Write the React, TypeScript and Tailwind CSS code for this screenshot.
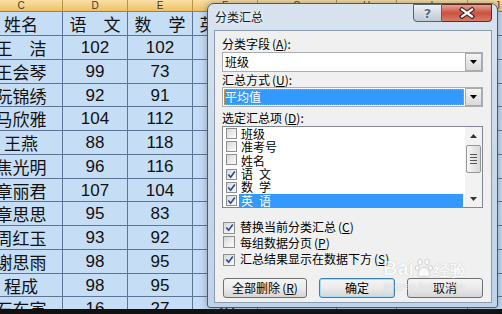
import clsx from "clsx";

const COLS = [
  { k: "C", w: "w-[83px]" },
  { k: "D", w: "w-[65px]" },
  { k: "E", w: "w-[65px]" },
  { k: "F", w: "w-[65px]" },
  { k: "G", w: "w-[79px]" },
  { k: "H", w: "w-[60px]" },
  { k: "I", w: "w-[71px]" },
  { k: "J", w: "w-[60px]" },
];

const ROWS = [
  ["姓名", "语　文", "数　学", "英　语"],
  ["王　洁", "102", "102", "98"],
  ["王会琴", "99", "73", "85"],
  ["阮锦绣", "92", "91", "90"],
  ["马欣雅", "104", "112", "101"],
  ["王燕", "88", "118", "95"],
  ["焦光明", "96", "116", "99"],
  ["章丽君", "107", "104", "102"],
  ["章思思", "95", "83", "88"],
  ["周红玉", "93", "92", "94"],
  ["谢思雨", "98", "95", "97"],
  ["程成", "98", "95", "93"],
  ["石东寅", "16", "27", "20"],
];

const ROW_H = [
  "h-6", "h-6", "h-6", "h-[23px]",
  "h-6", "h-6", "h-6", "h-[23px]",
  "h-6", "h-6", "h-6", "h-[23px]",
  "h-6",
];

const ITEMS = [
  { t: "班级", c: false },
  { t: "准考号", c: false },
  { t: "姓名", c: false },
  { t: "语\u2002文", c: true },
  { t: "数\u2002学", c: true },
  { t: "英\u2002语", c: true, sel: true },
];

function Mn({ k }: { k: string }) {
  return (
    <span className="ml-[2px]">
      (<span className="underline">{k}</span>)
    </span>
  );
}

function Check({ checked, big }: { checked?: boolean; big?: boolean }) {
  return (
    <span
      className={clsx(
        "inline-flex shrink-0 items-center justify-center border border-[#8e8f8f] bg-gradient-to-br from-[#d6d6d6] via-[#ebebeb] to-[#fbfbfb]",
        big ? "h-[12px] w-[12px]" : "h-[11px] w-[11px]"
      )}
    >
      {checked && (
        <svg viewBox="0 0 10 10" className="h-[9px] w-[9px]">
          <path d="M1.4 5 L4 7.9 L8.7 1.6" fill="none" stroke="#2b4b93" strokeWidth="1.8" />
        </svg>
      )}
    </span>
  );
}

function DropBtn() {
  return (
    <span className="flex h-[18px] w-[17px] shrink-0 items-center justify-center border border-[#a9a9a9] bg-gradient-to-b from-[#f4f4f4] to-[#dadada]">
      <svg width="7" height="4" viewBox="0 0 7 4">
        <path d="M0 0h7L3.5 4z" fill="#000" />
      </svg>
    </span>
  );
}

function Sheet() {
  return (
    <div className="h-[309px] overflow-hidden bg-[#c6ddf6] font-['Noto_Sans_CJK_SC',sans-serif] text-[#111]">
      <div className="ml-[-20px] flex h-[12px] border-b border-[#9c8048] bg-gradient-to-b from-[#fae0a6] to-[#efc060]">
        {COLS.map((c) => (
          <div
            key={c.k}
            className={clsx(
              c.w,
              "flex shrink-0 items-center justify-center border-r border-[#b8924a] font-['Liberation_Sans',sans-serif] text-[10px] leading-none text-[#3a3a3a]"
            )}
          >
            {c.k}
          </div>
        ))}
      </div>
      {ROWS.map((r, i) => (
        <div key={i} className={clsx(ROW_H[i], "ml-[-20px] flex border-b border-[#5d7496]")}>
          {COLS.map((c, j) => {
            const v = r[j] ?? "";
            const num = /^\d+$/.test(v);
            return (
              <div
                key={c.k}
                className={clsx(
                  c.w,
                  "flex shrink-0 items-center justify-center whitespace-pre border-r border-[#5d7496] text-[17px] leading-none",
                  num && "font-['Liberation_Sans',sans-serif]"
                )}
              >
                {v}
              </div>
            );
          })}
        </div>
      ))}
    </div>
  );
}

function Watermark() {
  // faint site stamp over the bottom-right corner
  return (
    <div className="pointer-events-none absolute left-[383px] top-[258px] flex flex-col items-center text-white opacity-60 [text-shadow:0_0_1px_#8a8a8a]">
      <div className="flex items-end">
        <span className="font-['Liberation_Sans',sans-serif] text-[20px] font-bold leading-none">Bai</span>
        <svg width="18" height="20" viewBox="0 0 18 20" className="mx-px">
          <g fill="#fff" stroke="#9a9a9a" strokeWidth="0.6">
            <ellipse cx="5" cy="4" rx="2.2" ry="3" />
            <ellipse cx="12" cy="4" rx="2.2" ry="3" />
            <ellipse cx="2.3" cy="10" rx="2" ry="2.6" />
            <ellipse cx="15.5" cy="10" rx="2" ry="2.6" />
            <path d="M9 9c-3 0-6 4.5-6 7.5 0 2.2 2 2.8 3.3 2.4 1.3-.4 2-.8 2.7-.8s1.4.4 2.7.8c1.3.4 3.3-.2 3.3-2.4C15 13.5 12 9 9 9z" />
          </g>
        </svg>
        <span className="text-[16px] font-bold leading-none">经验</span>
      </div>
      <span className="mt-[4px] font-['Liberation_Sans',sans-serif] text-[9px] leading-none tracking-[0.5px]">
        jingyan.baidu.com
      </span>
    </div>
  );
}

function Dialog() {
  return (
    <div className="absolute left-[207px] top-[3px] flex h-[305px] w-[291px] flex-col rounded-t-[7px] rounded-b-[3px] border border-[#4b5969] bg-gradient-to-b from-[#d8e3ef] via-[#cad9ea] to-[#bfd3e9] shadow-[0_0_7px_1px_rgba(60,70,90,0.35)] font-['Noto_Sans_CJK_SC',sans-serif]">
      <div className="flex h-[26px] shrink-0 items-start justify-between">
        <div className="pl-[7px] pt-[6px] text-[12px] leading-[14px] text-[#1b1b1b] [text-shadow:0_0_4px_#fff]">
          分类汇总
        </div>
        <div className="mr-[5px] flex">
          <div className="flex h-[18px] w-[29px] items-center justify-center rounded-bl-[4px] border border-[#59616d] bg-gradient-to-b from-[#eef2f6] via-[#d3dbe4] to-[#bfc9d4]">
            <span className="font-['DejaVu_Sans',sans-serif] text-[13px] font-bold leading-none text-[#5c6774] [text-shadow:0_0_2px_#fff,0_0_1px_#fff]">
              ?
            </span>
          </div>
          <div className="flex h-[18px] w-[50px] items-center justify-center rounded-br-[4px] border border-l-0 border-[#5b2c26] bg-gradient-to-b from-[#e3a396] via-[#c9503f] to-[#d87a68]">
            <svg width="18" height="12" viewBox="0 0 18 12">
              <path d="M4 2.5 L14 9.5 M14 2.5 L4 9.5" stroke="#3d1e1a" strokeWidth="4.4" strokeLinecap="square" />
              <path d="M4 2.5 L14 9.5 M14 2.5 L4 9.5" stroke="#fff" strokeWidth="2.2" strokeLinecap="square" />
            </svg>
          </div>
        </div>
      </div>

      <div className="ml-[6px] flex h-[273px] w-[278px] flex-col border border-[#8c9cb0] bg-[#f0f0f0] pl-[7px] pr-[8px] pt-[6px] text-[12px] leading-[14px] text-black">
        <div className="h-[14px]">
          分类字段<Mn k="A" />:
        </div>
        <div className="mt-px flex h-[20px] items-center border border-[#abadb3] bg-white">
          <span className="flex-1 pl-[2px]">班级</span>
          <DropBtn />
        </div>

        <div className="mt-px h-[14px]">
          汇总方式<Mn k="U" />:
        </div>
        <div className="flex h-[20px] items-center border border-[#abadb3] bg-white">
          <span className="mx-px flex h-[16px] flex-1 items-center bg-[#3399ff] pl-px text-white outline-1 outline-dotted outline-[#c9a35a] -outline-offset-1">
            平均值
          </span>
          <DropBtn />
        </div>

        <div className="mt-[4px] h-[14px]">
          选定汇总项<Mn k="D" />:
        </div>
        <div className="mt-px flex h-[82px] border border-[#828790] bg-white">
          <div className="flex flex-1 flex-col">
            {ITEMS.map((it) => (
              <div key={it.t} className="flex h-[13.33px] items-center">
                <span className="ml-[3px]">
                  <Check checked={it.c} />
                </span>
                <span
                  className={clsx(
                    "ml-[2px] mr-[2px] flex h-full flex-1 items-center whitespace-pre pl-[2px] leading-[13px]",
                    it.sel && "bg-[#3399ff] text-white"
                  )}
                >
                  {it.t}
                </span>
              </div>
            ))}
          </div>
          <div className="flex w-[17px] flex-col bg-[#f2f2f2]">
            <div className="flex h-[17px] items-center justify-center">
              <svg width="7" height="4" viewBox="0 0 7 4">
                <path d="M0 4h7L3.5 0z" fill="#333" />
              </svg>
            </div>
            <div className="mx-px mt-px flex h-[28px] flex-col items-center justify-center gap-[2px] rounded-[2px] border border-[#979797] bg-gradient-to-r from-[#f6f6f6] to-[#d9d9d9]">
              <span className="h-px w-[7px] bg-[#555]" />
              <span className="h-px w-[7px] bg-[#555]" />
              <span className="h-px w-[7px] bg-[#555]" />
              <span className="h-px w-[7px] bg-[#555]" />
            </div>
            <div className="flex-1" />
            <div className="flex h-[17px] items-center justify-center">
              <svg width="7" height="4" viewBox="0 0 7 4">
                <path d="M0 0h7L3.5 4z" fill="#333" />
              </svg>
            </div>
          </div>
        </div>

        <div className="mt-[11px] flex h-[16px] items-center">
          <span className="ml-px">
            <Check checked big />
          </span>
          <span className="ml-[5px]">
            替换当前分类汇总<Mn k="C" />
          </span>
        </div>
        <div className="flex h-[16px] items-center">
          <span className="ml-px">
            <Check big />
          </span>
          <span className="ml-[5px]">
            每组数据分页<Mn k="P" />
          </span>
        </div>
        <div className="flex h-[16px] items-center">
          <span className="ml-px">
            <Check checked big />
          </span>
          <span className="ml-[5px]">
            汇总结果显示在数据下方<Mn k="S" />
          </span>
        </div>

        <div className="mt-[11px] flex h-[20px]">
          <button className="ml-px flex w-[84px] items-center justify-center rounded-[3px] border border-[#707070] bg-gradient-to-b from-[#f4f4f4] via-[#ebebeb] to-[#d5d5d5] leading-none">
            全部删除<Mn k="R" />
          </button>
          <button className="ml-[12px] flex w-[76px] items-center justify-center rounded-[3px] border border-[#3c7fb1] bg-gradient-to-b from-[#f4f4f4] via-[#ebebeb] to-[#d5d5d5] leading-none shadow-[inset_0_0_0_1px_#a6dcf6]">
            确定
          </button>
          <button className="ml-[12px] flex w-[76px] items-center justify-center rounded-[3px] border border-[#707070] bg-gradient-to-b from-[#f4f4f4] via-[#ebebeb] to-[#d5d5d5] leading-none">
            取消
          </button>
        </div>
      </div>
    </div>
  );
}

export default function App() {
  return (
    <div className="relative h-[314px] w-[502px] overflow-hidden bg-[#111]">
      <Sheet />
      <div className="h-[5px] bg-[#111]" />
      <Dialog />
      <Watermark />
    </div>
  );
}
